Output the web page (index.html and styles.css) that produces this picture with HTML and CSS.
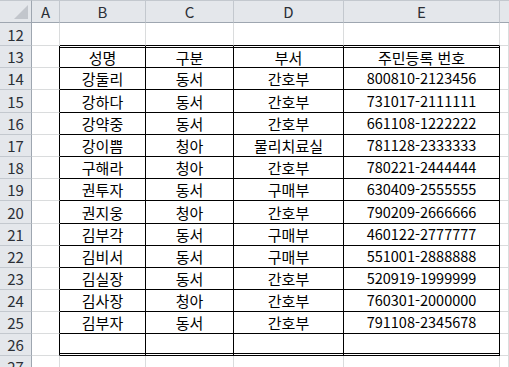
FILE: index.html
```html
<!DOCTYPE html>
<html lang="ko">
<head>
<meta charset="utf-8">
<link rel="stylesheet" href="styles.css">
</head>
<body>
<div class="sheet">
  <div class="hd corner"><span class="tri"></span></div>
  <div class="hd col">A</div>
  <div class="hd col">B</div>
  <div class="hd col">C</div>
  <div class="hd col">D</div>
  <div class="hd col">E</div>
  <div class="hd col last"></div>

  <div class="hd row">12</div>
  <div class="c"></div><div class="c tb-top"></div><div class="c tb-top"></div><div class="c tb-top"></div><div class="c tb-top"></div><div class="c"></div>

  <div class="hd row">13</div>
  <div class="c lb"></div><div class="c t first">성명</div><div class="c t first">구분</div><div class="c t first">부서</div><div class="c t first">주민등록 번호</div><div class="c"></div>

  <div class="hd row">14</div>
  <div class="c lb"></div><div class="c t">강둘리</div><div class="c t">동서</div><div class="c t">간호부</div><div class="c t n">800810-2123456</div><div class="c"></div>

  <div class="hd row">15</div>
  <div class="c lb"></div><div class="c t">강하다</div><div class="c t">동서</div><div class="c t">간호부</div><div class="c t n">731017-2111111</div><div class="c"></div>

  <div class="hd row">16</div>
  <div class="c lb"></div><div class="c t">강약중</div><div class="c t">동서</div><div class="c t">간호부</div><div class="c t n">661108-1222222</div><div class="c"></div>

  <div class="hd row">17</div>
  <div class="c lb"></div><div class="c t">강이쁨</div><div class="c t">청아</div><div class="c t">물리치료실</div><div class="c t n">781128-2333333</div><div class="c"></div>

  <div class="hd row">18</div>
  <div class="c lb"></div><div class="c t">구해라</div><div class="c t">청아</div><div class="c t">간호부</div><div class="c t n">780221-2444444</div><div class="c"></div>

  <div class="hd row">19</div>
  <div class="c lb"></div><div class="c t">권투자</div><div class="c t">동서</div><div class="c t">구매부</div><div class="c t n">630409-2555555</div><div class="c"></div>

  <div class="hd row">20</div>
  <div class="c lb"></div><div class="c t">권지웅</div><div class="c t">청아</div><div class="c t">간호부</div><div class="c t n">790209-2666666</div><div class="c"></div>

  <div class="hd row">21</div>
  <div class="c lb"></div><div class="c t">김부각</div><div class="c t">동서</div><div class="c t">구매부</div><div class="c t n">460122-2777777</div><div class="c"></div>

  <div class="hd row">22</div>
  <div class="c lb"></div><div class="c t">김비서</div><div class="c t">동서</div><div class="c t">구매부</div><div class="c t n">551001-2888888</div><div class="c"></div>

  <div class="hd row">23</div>
  <div class="c lb"></div><div class="c t">김실장</div><div class="c t">동서</div><div class="c t">간호부</div><div class="c t n">520919-1999999</div><div class="c"></div>

  <div class="hd row">24</div>
  <div class="c lb"></div><div class="c t">김사장</div><div class="c t">청아</div><div class="c t">간호부</div><div class="c t n">760301-2000000</div><div class="c"></div>

  <div class="hd row">25</div>
  <div class="c lb"></div><div class="c t">김부자</div><div class="c t">동서</div><div class="c t">간호부</div><div class="c t n">791108-2345678</div><div class="c"></div>

  <div class="hd row">26</div>
  <div class="c lb"></div><div class="c t lastrow"></div><div class="c t lastrow"></div><div class="c t lastrow"></div><div class="c t lastrow"></div><div class="c"></div>

  <div class="hd row">27</div>
  <div class="c"></div><div class="c"></div><div class="c"></div><div class="c"></div><div class="c"></div><div class="c"></div>
</div>
</body>
</html>
```

FILE: styles.css
```css
html, body {
  margin: 0;
  padding: 0;
  background: #ffffff;
  overflow: hidden;
}

body {
  width: 509px;
  height: 367px;
  font-family: "Noto Sans CJK KR", "Noto Sans", sans-serif;
  font-size: 15px;
  color: #000;
}

.sheet {
  display: grid;
  grid-template-columns: 32px 28px 86px 88px 110px 156px 1fr;
  grid-template-rows: 23px 23px 22px 22px 23px 22px 22px 22px 22px 23px 22px 22px 22px 22px 22px 22px 22px;
  width: 509px;
}

.c, .hd {
  box-sizing: border-box;
  border-right: 1px solid #dadcdd;
  border-bottom: 1px solid #dadcdd;
  display: flex;
  align-items: center;
  justify-content: center;
  white-space: nowrap;
  overflow: hidden;
  line-height: 1;
}

.hd {
  background: #e4e7eb;
  color: #2b2f36;
  font-size: 15px;
  border-right-color: #c3c8ce;
  border-bottom-color: #c3c8ce;
}

.hd.col {
  border-top: 1px solid #c3c8ce;
  border-bottom-color: #9ea6b0;
}

.hd.last {
  border-right: none;
}

.hd.corner {
  position: relative;
  border-top: 1px solid #c3c8ce;
  border-bottom-color: #9ea6b0;
  border-right-color: #9ea6b0;
}

.tri {
  position: absolute;
  right: 3px;
  bottom: 3px;
  width: 0;
  height: 0;
  border-left: 14px solid transparent;
  border-bottom: 14px solid #c2c6cc;
}

.hd.row {
  border-right-color: #9ea6b0;
}

.c.tb-top {
  border-bottom-color: #000;
}

.c.lb {
  border-right-color: #000;
}

.c.t {
  border-right-color: #000;
  border-bottom-color: #000;
}

.c.n {
  font-size: 14.5px;
}

.c.first {
  box-shadow: inset 0 1px 0 #fff, inset 0 2px 0 #000;
  padding-top: 2px;
}

.c.lastrow {
  box-shadow: inset 0 -1px 0 #fff, inset 0 -2px 0 #000;
}
```
